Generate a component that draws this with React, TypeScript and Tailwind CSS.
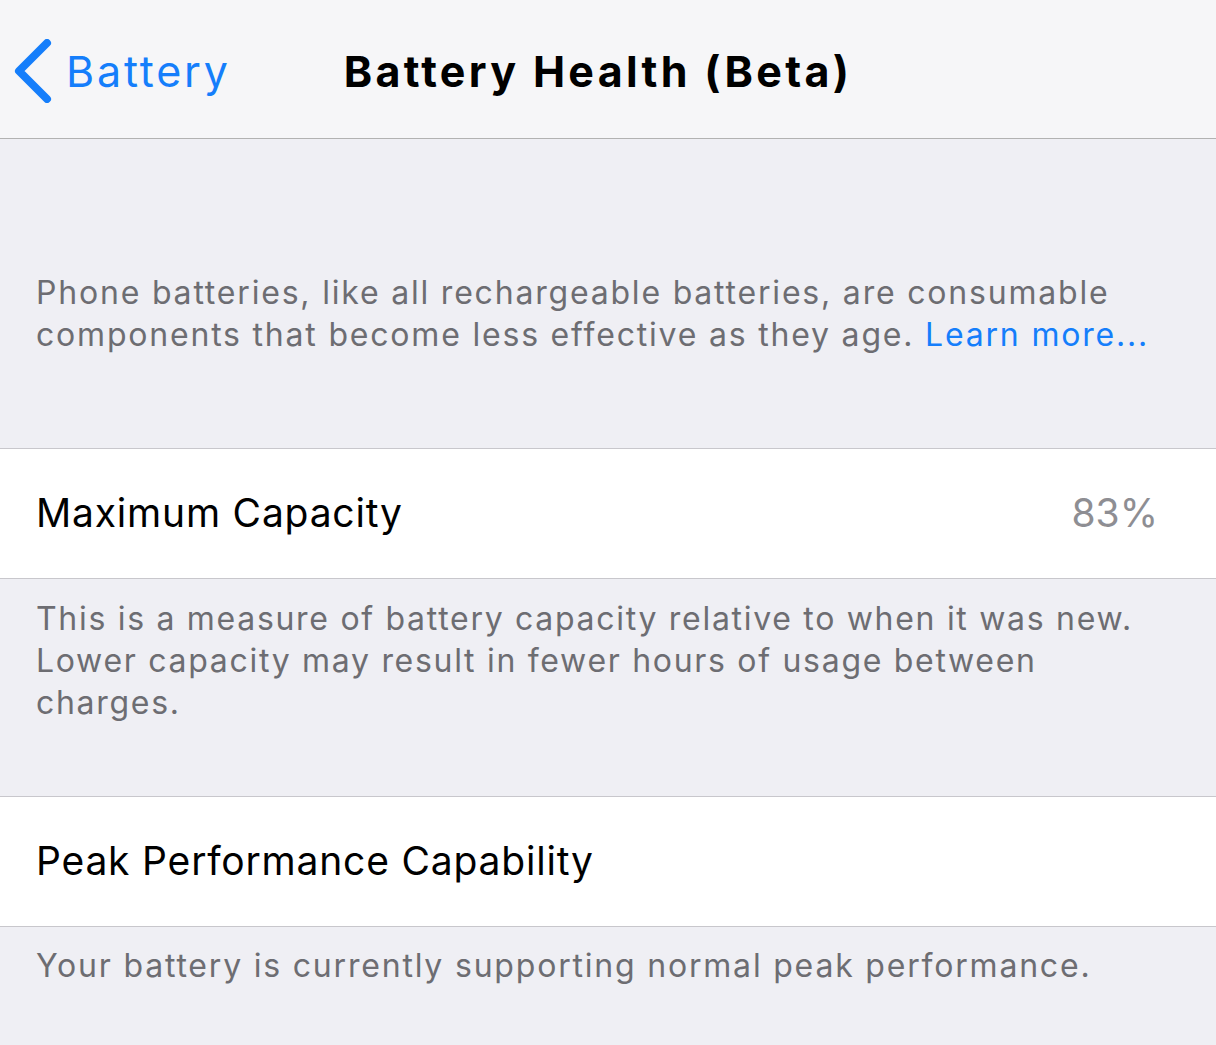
import React from "react";

export default function App() {
  const font = { fontFamily: "Inter, 'Noto Sans', sans-serif" };
  return (
    <div className="w-[1216px] h-[1045px] overflow-hidden bg-[#efeff4]" style={font}>
      <div className="h-[139px] bg-[#f6f6f8] border-b border-[#b2b2b2] flex items-center">
        <div className="flex items-center pl-[14px] pt-[4px]">
          <svg width="38" height="64" viewBox="0 0 38 64" className="text-[#157efb]">
            <polyline points="33,4 5,32 33,60" fill="none" stroke="currentColor" strokeWidth="8" strokeLinecap="round" strokeLinejoin="round" />
          </svg>
          <span className="ml-[14px] text-[43px] leading-none text-[#157efb] tracking-[2.8px]">Battery</span>
        </div>
        <span className="ml-[113px] pt-[4px] text-[43px] leading-none font-bold text-black tracking-[3.3px]">Battery Health (Beta)</span>
      </div>

      <div className="pt-[133px] pb-[92px] px-[36px] text-[32px] leading-[42px] text-[#6d6d72] tracking-[1.8px] whitespace-nowrap">
        Phone batteries, like all rechargeable batteries, are consumable
        <br />
        components that become less effective as they age. <span className="text-[#157efb]">Learn more...</span>
      </div>

      <div className="h-[131px] bg-white border-y border-[#c8c7cc] flex items-center justify-between pl-[36px] pr-[58px]">
        <span className="text-[39px] text-black tracking-[0.8px]">Maximum Capacity</span>
        <span className="text-[39px] text-[#8e8e93]">83%</span>
      </div>

      <div className="pt-[19px] pb-[72px] px-[36px] text-[32px] leading-[42px] text-[#6d6d72] tracking-[1.7px] whitespace-nowrap">
        This is a measure of battery capacity relative to when it was new.
        <br />
        Lower capacity may result in fewer hours of usage between
        <br />
        charges.
      </div>

      <div className="h-[131px] bg-white border-y border-[#c8c7cc] flex items-center pl-[36px]">
        <span className="text-[39px] text-black tracking-[0.8px]">Peak Performance Capability</span>
      </div>

      <div className="pt-[18px] px-[36px] text-[32px] leading-[42px] text-[#6d6d72] tracking-[1.8px] whitespace-nowrap">
        Your battery is currently supporting normal peak performance.
      </div>
    </div>
  );
}
